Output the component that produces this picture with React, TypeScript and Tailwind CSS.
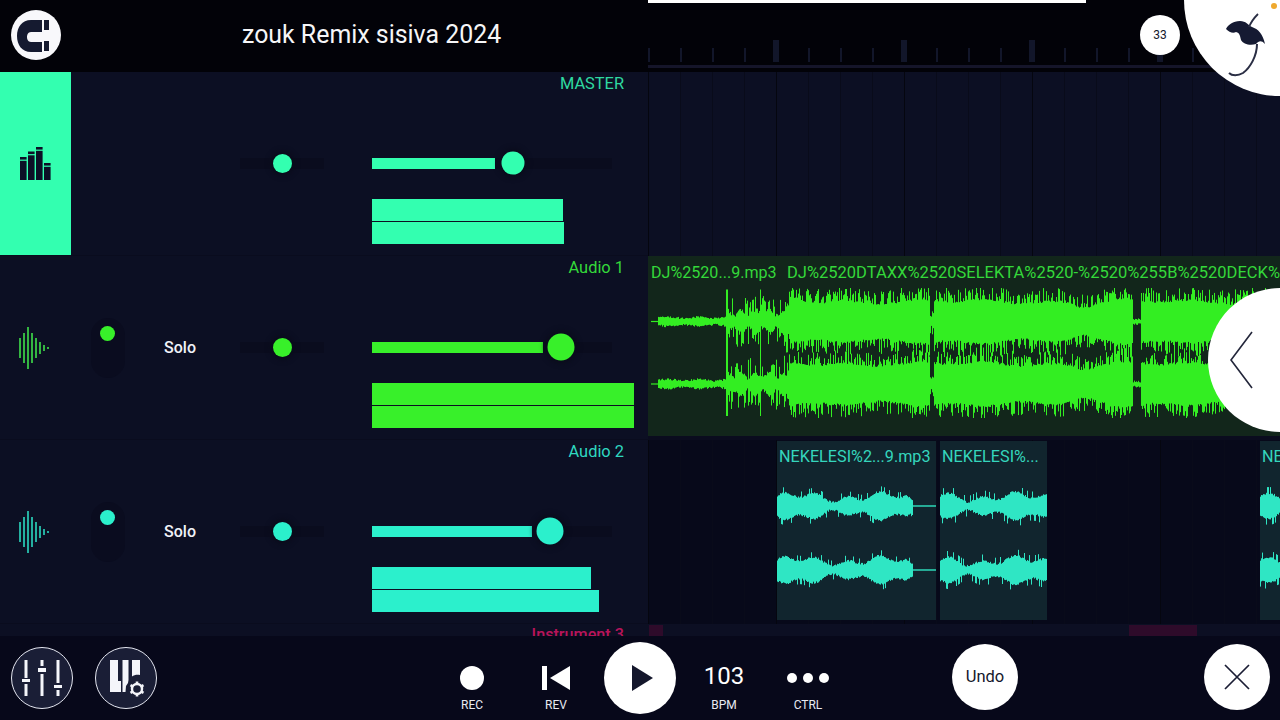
import React, { useMemo } from "react";

function rng(seed: number) {
  let s = seed;
  return () => {
    s = (s * 16807) % 2147483647;
    return (s - 1) / 2147483646;
  };
}

function build(width: number, centers: number[], amp: (x: number, r: () => number) => number, seed: number) {
  let d = "";
  centers.forEach((c, i) => {
    const r = rng(seed + i * 97);
    for (let x = 0; x < width; x++) {
      const up = amp(x, r);
      const dn = amp(x, r);
      d += `M${x + 0.5} ${(c - up).toFixed(1)}V${(c + dn).toFixed(1)}`;
    }
  });
  return d;
}

function Wave({ width, height, centers, amp, seed, color }: { width: number; height: number; centers: number[]; amp: (x: number, r: () => number) => number; seed: number; color: string }) {
  const d = useMemo(() => build(width, centers, amp, seed), [width, height, seed]);
  return (
    <svg width={width} height={height} className="block shrink-0">
      <path d={d} stroke={color} strokeWidth="1" fill="none" />
    </svg>
  );
}

const ampA1 = (x: number, r: () => number) => {
  const px = x + 648;
  const v = r();
  const s = r();
  if (px < 651) return 0;
  if (px < 658) return 0.6;
  if (px < 726) return 3 + v * 2 + 0.8 * Math.sin(px / 5);
  if (px < 728 || Math.abs(px - 760) < 1) return 32;
  if (px < 784) {
    return s > 0.7 ? 14 + v * 12 : 7 + 3 * Math.sin(px / 2.3) + v * 4;
  }
  if (px < 790) return 8 + s * 24;
  if (px >= 930 && px < 934) return 4 + v * 10;
  if (px >= 1133 && px < 1141) return 1.5 + v * 2;
  const env = 19 + 1.6 * Math.sin(px / 11) + 1.2 * Math.sin(px / 29);
  const dip = px > 1062 && px < 1112 ? 0.86 + 0.1 * Math.sin(px / 6) : 1;
  const core = (env + v * 2) * dip;
  if (s > 0.72) return core + 6 + v * 7;
  if (s > 0.35) return core + (s - 0.35) * 30 * (0.4 + v);
  return core;
};

const bump = (x: number, o: number) =>
  8 + 2.8 * Math.sin((x + o) / 5.1) + 2.8 * Math.sin((x + o) / 14);

const ampClip1 = (x: number, r: () => number) => {
  if (x >= 136) return 0.7;
  const v = r();
  const edge = x > 128 ? (136 - x) / 8 : 1;
  return (bump(x, 2) + v * 2.4 + (v > 0.9 ? 4 : 0)) * (0.5 + edge / 2);
};
const ampClip2 = (x: number, r: () => number) => {
  const v = r();
  return bump(x, 30) + v * 2.4 + (v > 0.88 ? 5 : 0);
};

function Track({
  color,
  label,
  fill,
  thumb,
  thumbSize,
  meter,
  knobless,
  icon,
  labelColor,
  iconBg,
}: {
  color: string;
  label: string;
  fill: number;
  thumb: number;
  thumbSize: string;
  meter: [number, number];
  knobless?: boolean;
  icon: React.ReactNode;
  labelColor: string;
  iconBg?: string;
}) {
  return (
    <div className="flex h-[184px] border-b border-[#0a0c1e]">
      <div className="flex w-[71px] shrink-0 items-center justify-center" style={iconBg ? { backgroundColor: iconBg } : undefined}>
        {icon}
      </div>
      <div className="flex w-[73px] shrink-0 items-center justify-center">
        {!knobless && (
          <div className="flex h-[60px] w-[34px] justify-center rounded-full bg-[#0a0c1f] pt-[8px]">
            <div className="h-[15px] w-[15px] rounded-full" style={{ backgroundColor: color }} />
          </div>
        )}
      </div>
      <div className="flex w-[72px] shrink-0 items-center justify-center text-[16px] font-medium text-[#f0f2f8]">
        {!knobless && "Solo"}
      </div>
      <div className="ml-[24px] flex w-[84px] shrink-0 items-center">
        <div className="relative h-[11px] w-full bg-[#0a0c1e]">
          <div className="absolute left-[33px] top-[-4px] h-[19px] w-[19px] rounded-full shadow-[0_0_5px_3px_#0a0c1c]" style={{ backgroundColor: color }} />
        </div>
      </div>
      <div className="ml-[48px] flex w-[276px] shrink-0 flex-col">
        <div className="h-[22px] pr-[24px] pt-[1px] text-right text-[16.4px] leading-[22px]" style={{ color: labelColor }}>
          {label}
        </div>
        <div className="mt-[56px] flex h-[26px] items-center">
          <div className="relative h-[11px] w-[240px] bg-[#0a0c1e]">
            <div className="h-full" style={{ width: fill, backgroundColor: color }} />
            <div
              className={`absolute top-1/2 -translate-x-1/2 -translate-y-1/2 rounded-full shadow-[0_0_5px_3px_#0a0c1c] ${thumbSize}`}
              style={{ left: thumb, backgroundColor: color }}
            />
          </div>
        </div>
        <div className="mt-[23px] flex flex-col gap-[1px]">
          <div className="h-[22px]" style={{ width: meter[0], backgroundColor: color }} />
          <div className="h-[22px]" style={{ width: meter[1], backgroundColor: color }} />
        </div>
      </div>
    </div>
  );
}

function WaveIcon({ color }: { color: string }) {
  const xs = [1, 5, 9, 13, 17, 21, 25, 29];
  const hs = [20, 30, 42, 30, 20, 12, 6, 2];
  return (
    <svg width="32" height="44" viewBox="0 0 32 44" className="ml-[-2px]">
      {xs.map((x, i) => (
        <line key={x} x1={x} x2={x} y1={22 - hs[i] / 2} y2={22 + hs[i] / 2} stroke={color} strokeWidth="1.6" />
      ))}
    </svg>
  );
}

function BarsIcon() {
  const bars = [
    [0, 10],
    [8, 4.5],
    [16, 0],
    [24, 16],
  ];
  return (
    <svg width="31" height="33" viewBox="0 0 31 33">
      {bars.map(([x, y]) => (
        <g key={x} fill="#0c0f26">
          <rect x={x} y={y} width="6.6" height="2.6" />
          <rect x={x} y={y + 3.8} width="6.6" height={33 - y - 3.8} />
        </g>
      ))}
    </svg>
  );
}

function MixerIcon() {
  return (
    <svg width="62" height="62" viewBox="0 0 62 62" fill="#f4f5fa">
      <rect x="13.500" y="13" width="3" height="18" />
      <rect x="11" y="32" width="8" height="3" />
      <rect x="13.500" y="37" width="3" height="12" />
      <rect x="29.500" y="13" width="3" height="6" />
      <rect x="27" y="21" width="8" height="4" />
      <rect x="29.500" y="27" width="3" height="22" />
      <rect x="45.500" y="13" width="3" height="23" />
      <rect x="43" y="38" width="8" height="3" />
      <rect x="45.500" y="43" width="3" height="6" />
    </svg>
  );
}

function PianoIcon() {
  return (
    <svg width="62" height="62" viewBox="0 0 62 62" fill="#f4f5fa">
      <path d="M15 13h8v21h3v11H15z" />
      <path d="M27.500 13h6v20l-.5 3-2 3-.5 6h-3z" />
      <path d="M37 13h8v15c-3-.6-6 0-8 1.500z" />
      <circle cx="42" cy="42" r="5" fill="none" stroke="#f4f5fa" strokeWidth="2.4" />
      <g stroke="#f4f5fa" strokeWidth="2.6">
        <line x1="42" y1="34.500" x2="42" y2="37" />
        <line x1="42" y1="47" x2="42" y2="49.500" />
        <line x1="35.500" y1="38.200" x2="37.700" y2="39.500" />
        <line x1="46.300" y1="44.500" x2="48.500" y2="45.800" />
        <line x1="35.500" y1="45.800" x2="37.700" y2="44.500" />
        <line x1="46.300" y1="39.500" x2="48.500" y2="38.200" />
      </g>
    </svg>
  );
}

function TransportLabel({ children }: { children: React.ReactNode }) {
  return <div className="mt-[8px] text-center text-[12px] leading-[14px] text-[#e8eaf2]">{children}</div>;
}

export default function App() {
  const grid =
    "bg-[repeating-linear-gradient(90deg,#05060f_0px,#05060f_1px,transparent_1px,transparent_128px),repeating-linear-gradient(90deg,#090b1a_0px,#090b1a_1px,transparent_1px,transparent_32px)]";
  const clipLabel = "h-[30px] whitespace-nowrap pl-[2px] pt-[7px] text-[16.2px] leading-[18px] text-[#35d6bd]";
  return (
    <div className="relative flex h-[720px] w-[1280px] flex-col overflow-hidden bg-[#0c0f23] font-['Roboto',sans-serif]">
      {/* Header */}
      <header className="flex h-[72px] shrink-0 bg-[#020208]">
        <div className="flex w-[648px] shrink-0 items-center">
          <div className="mb-[2px] ml-[11px] h-[50px] w-[50px] rounded-full bg-[#f8f8fb]">
            <svg width="50" height="50" viewBox="0 0 50 50" fill="#151a30">
              <path d="M31 10H20C11 10 6 17 6 26s5 16 14 16h11V32H20c-3 0-4-3-4-5s1-5 4-5h11z" />
              <rect x="33" y="10" width="5" height="10" />
              <rect x="33" y="31" width="5" height="10" />
            </svg>
          </div>
          <h1 className="mb-[2px] ml-[181px] whitespace-nowrap text-[24.9px] font-normal text-[#f6f6f8]">zouk Remix sisiva 2024</h1>
        </div>
        <div className="flex-1">
          <div className="h-[3px] w-[438px] bg-white" />
          <div className="mt-[37px] flex h-[22px] items-end">
            {Array.from({ length: 20 }).map((_, i) => (
              <div key={i} className="flex w-[32px] shrink-0 justify-start">
                {i % 4 === 0 && i > 0 ? (
                  <div className="ml-[-3px] h-[22px] w-[6px] bg-[#12162a]" />
                ) : (
                  <div className="h-[14px] w-[2px] bg-[#12162a]" />
                )}
              </div>
            ))}
          </div>
          <div className="mt-[3px] h-[3px] bg-[#15152a]" />
        </div>
      </header>

      {/* Tracks */}
      <main className="flex min-h-0 flex-1 overflow-hidden">
        <div className="w-[648px] shrink-0">
          <Track
            color="#33ffb0"
            labelColor="#2fd9a0"
            label="MASTER"
            fill={123}
            thumb={141}
            thumbSize="h-[23px] w-[23px]"
            meter={[191, 192]}
            knobless
            iconBg="#33ffb0"
            icon={<BarsIcon />}
          />
          <Track
            color="#38f02a"
            labelColor="#34d83a"
            label="Audio 1"
            fill={171}
            thumb={189}
            thumbSize="h-[27px] w-[27px]"
            meter={[262, 262]}
            icon={<WaveIcon color="#3fe04a" />}
          />
          <Track
            color="#2bf0cc"
            labelColor="#2fd8c0"
            label="Audio 2"
            fill={160}
            thumb={178}
            thumbSize="h-[27px] w-[27px]"
            meter={[219, 227]}
            icon={<WaveIcon color="#2bd8c0" />}
          />
          <div className="h-[12px] overflow-hidden pr-[24px] pt-[2px] text-right">
            <span className="block text-[16.2px] font-medium leading-[18px] text-[#b8145a]">Instrument 3</span>
          </div>
        </div>

        <div className="min-w-0 flex-1">
          {/* master lane */}
          <div className={`h-[184px] ${grid}`} />
          {/* audio 1 lane */}
          <div className="h-[184px] bg-[#0a0c1e]">
            <div className="h-[180px] overflow-hidden bg-[#12261b]">
              <div className="flex h-[32px] whitespace-nowrap pl-[3px] pt-[8px] leading-[18px] text-[#34d83a]">
                <span className="w-[136px] shrink-0 text-[16.100px]">DJ%2520...9.mp3</span>
                <span className="text-[16.500px]">DJ%2520DTAXX%2520SELEKTA%2520-%2520%255B%2520DECK%</span>
              </div>
              <Wave width={632} height={130} centers={[33.5, 96]} amp={ampA1} seed={4242} color="#33ee22" />
            </div>
          </div>
          {/* audio 2 lane */}
          <div className={`flex h-[184px] bg-[#07091a] pt-[1px] ${grid}`}>
            <div className="ml-[129px] h-[179px] w-[159px] shrink-0 overflow-hidden bg-[#11252e]">
              <div className={clipLabel}>NEKELESI%2...9.mp3</div>
              <Wave width={159} height={149} centers={[35, 99]} amp={ampClip1} seed={77} color="#2fe6c4" />
            </div>
            <div className="ml-[4px] h-[179px] w-[107px] shrink-0 overflow-hidden bg-[#11252e]">
              <div className={clipLabel}>NEKELESI%...</div>
              <Wave width={107} height={149} centers={[35, 99]} amp={ampClip2} seed={913} color="#2fe6c4" />
            </div>
            <div className="ml-[213px] h-[179px] w-[20px] shrink-0 overflow-hidden bg-[#11252e]">
              <div className={clipLabel}>NE</div>
              <Wave width={20} height={149} centers={[35, 99]} amp={ampClip2} seed={55} color="#2fe6c4" />
            </div>
          </div>
          {/* instrument lane */}
          <div className="flex h-[12px] pt-[1px]">
            <div className="ml-[1px] h-full w-[14px] shrink-0 bg-[#2e0b2a]" />
            <div className="ml-[466px] h-full w-[68px] shrink-0 bg-[#2e0b2a]" />
          </div>
        </div>
      </main>

      {/* Footer */}
      <footer className="flex h-[84px] shrink-0 items-center bg-[#07081a]">
        <div className="ml-[11px] flex gap-[22px]">
          <div className="h-[62px] w-[62px] rounded-full border border-[#e4e6f0] bg-[#1a1e36]">
            <div className="m-[-1px]"><MixerIcon /></div>
          </div>
          <div className="h-[62px] w-[62px] rounded-full border border-[#e4e6f0] bg-[#1a1e36]">
            <div className="m-[-1px]"><PianoIcon /></div>
          </div>
        </div>
        <div className="ml-[273px] flex h-full items-start">
          <div className="w-[84px] pt-[30px]">
            <div className="flex h-[24px] justify-center"><div className="h-[24px] w-[24px] rounded-full bg-white" /></div>
            <TransportLabel>REC</TransportLabel>
          </div>
          <div className="w-[84px] pt-[30px]">
            <div className="flex h-[24px] justify-center">
              <svg width="30" height="24" viewBox="0 0 30 24" fill="#fff">
                <rect x="1" y="0" width="5" height="24" />
                <path d="M29 0V24L9 12z" />
              </svg>
            </div>
            <TransportLabel>REV</TransportLabel>
          </div>
          <div className="flex w-[84px] justify-center pt-[6px]">
            <div className="flex h-[72px] w-[72px] items-center justify-center rounded-full bg-white">
              <svg width="21" height="26" viewBox="0 0 21 26" className="ml-[4px]"><path d="M0 0L21 13L0 26z" fill="#14172c" /></svg>
            </div>
          </div>
          <div className="w-[84px] pt-[27px]">
            <div className="flex h-[27px] items-center justify-center text-[24px] leading-[27px] text-white">103</div>
            <TransportLabel>BPM</TransportLabel>
          </div>
          <div className="w-[84px] pt-[30px]">
            <div className="flex h-[24px] items-center justify-center gap-[6px]">
              <div className="h-[10px] w-[10px] rounded-full bg-white" />
              <div className="h-[10px] w-[10px] rounded-full bg-white" />
              <div className="h-[10px] w-[10px] rounded-full bg-white" />
            </div>
            <TransportLabel>CTRL</TransportLabel>
          </div>
        </div>
        <div className="mb-[2px] ml-[102px] flex h-[66px] w-[66px] items-center justify-center rounded-full bg-white text-[16.500px] text-[#14172c]">Undo</div>
        <div className="mb-[2px] ml-[186px] flex h-[66px] w-[66px] items-center justify-center rounded-full bg-white">
          <svg width="26" height="26" viewBox="0 0 26 26" stroke="#1a1d34" strokeWidth="1.7"><path d="M1 1L25 25M25 1L1 25" /></svg>
        </div>
      </footer>

      {/* Overlays */}
      <div className="absolute right-[-96px] top-[-96px] h-[192px] w-[192px] rounded-full bg-white" />
      <div className="absolute left-[1271px] top-[3px] h-[6px] w-[6px] rounded-full bg-[#efa92e]" />
      <svg className="absolute left-[1220px] top-[10px]" width="50" height="70" viewBox="1220 10 50 70">
        <path d="M1226 29C1228 25 1233 21 1240 21C1246 21 1248 25 1252 27C1258 29 1263 34 1265 44C1261 40 1259 41 1256 44C1250 46 1243 44 1241 40C1240 36 1240 33 1236 32C1233 34 1229 32 1226 29Z" fill="#151a32" />
        <path d="M1258 14C1254 18 1251 22 1249 27" stroke="#2a2e44" strokeWidth="1.8" fill="none" />
        <path d="M1257 44C1257 56 1250 68 1243 73C1238 76 1232 76 1229 73" stroke="#2a2e44" strokeWidth="2" fill="none" />
      </svg>
      <div className="absolute left-[1140px] top-[15px] flex h-[40px] w-[40px] items-center justify-center rounded-full bg-white text-[12px] text-[#14172c]">33</div>
      <div className="absolute left-[1208px] top-[288px] flex h-[144px] w-[144px] items-center rounded-full bg-white pl-[21px]">
        <svg width="24" height="58" viewBox="0 0 24 58" fill="none" stroke="#23263a" strokeWidth="1.6"><path d="M23 1L2 29L23 57" /></svg>
      </div>
    </div>
  );
}
